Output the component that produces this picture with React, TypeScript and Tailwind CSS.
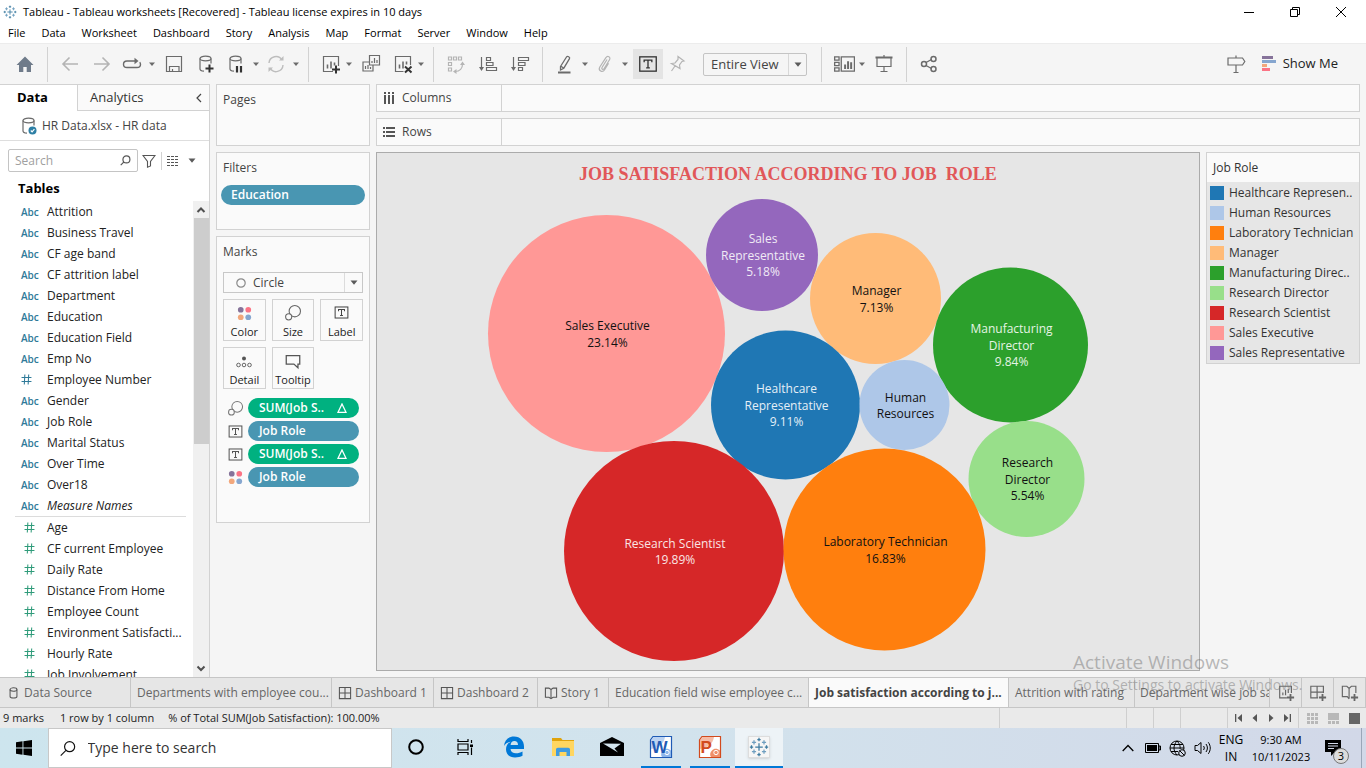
import type { ReactNode } from "react";

type P = { children: ReactNode; className?: string };

/* Outline icon on a 20 unit grid */
const Ic = ({ children, className = "size-5 text-[#6b6b6b]" }: P) => (
  <svg viewBox="0 0 20 20" fill="none" stroke="currentColor" strokeWidth="1.2" className={`shrink-0 ${className}`} aria-hidden="true">
    {children}
  </svg>
);

const Tool = ({ label, className = "", children }: P & { label: string }) => (
  <button type="button" aria-label={label} className={`flex h-[30px] w-7 shrink-0 items-center justify-center ${className}`}>
    {children}
  </button>
);

const Caret = ({ label, className = "" }: { label: string; className?: string }) => (
  <button type="button" aria-label={label} className={`flex h-[30px] w-2 shrink-0 items-center justify-center text-[#6b6b6b] ${className}`}>
    <svg viewBox="0 0 6 4" className="h-1 w-1.5" fill="currentColor" aria-hidden="true"><path d="M0 .5h6L3 4z" /></svg>
  </button>
);

const Sep = () => <span className="mx-2 h-[35px] w-px shrink-0 bg-[#d2d2d2]" />;

const Down = ({ className = "" }: { className?: string }) => (
  <svg viewBox="0 0 8 5" className={`h-[5px] w-2 ${className}`} fill="#5b5b5b" aria-hidden="true"><path d="M.5 .5h7L4 4.8z" /></svg>
);

const TIcon = ({ className }: { className?: string }) => (
  <Ic className={className}>
    <rect x="2.5" y="3.5" width="15" height="13" />
    <path d="M6.5 8.5v-2h7v2M10 6.500v7M8.300 13.500h3.400" />
  </Ic>
);

const SizeIcon = ({ className }: { className?: string }) => (
  <Ic className={className}>
    <circle cx="12" cy="8" r="6.3" />
    <circle cx="5.2" cy="14.3" r="3.4" fill="#fafafa" />
  </Ic>
);

const Dots = ({ className }: { className?: string }) => (
  <svg viewBox="0 0 20 20" className={className} aria-hidden="true">
    <circle cx="5" cy="5" r="3.8" fill="#86739a" />
    <circle cx="15" cy="5" r="3.8" fill="#fb7485" />
    <circle cx="5" cy="15" r="3.8" fill="#f2a77c" />
    <circle cx="15" cy="15" r="3.8" fill="#86a6cf" />
  </svg>
);

const Snow = ({ className }: { className?: string }) => (
  <svg viewBox="0 0 24 24" className={className} fill="none" stroke="#3d7ba0" strokeWidth="1.5" aria-hidden="true">
    <path d="M12 7.5v9M7.5 12h9M12 1v4M10 3h4M12 19v4M10 21h4M3 10v4M1 12h4M21 10v4M19 12h4" />
    <path d="M6 4v5M3.500 6.500h5M18 4v5M15.500 6.500h5M6 15v5M3.500 17.500h5M18 15v5M15.500 17.500h5" stroke="#6f9fc0" />
  </svg>
);

const Cyl = ({ children }: { children?: ReactNode }) => (
  <Ic>
    <ellipse cx="9.500" cy="4.500" rx="5.500" ry="2.300" />
    <path d="M4 4.500v10.500c0 1.200 1.500 2 4 2.200M15 4.500v5" />
    {children}
  </Ic>
);

const menus = ["File", "Data", "Worksheet", "Dashboard", "Story", "Analysis", "Map", "Format", "Server", "Window", "Help"];

const dimensions = ["Attrition", "Business Travel", "CF age band", "CF attrition label", "Department", "Education", "Education Field", "Emp No", "Employee Number", "Gender", "Job Role", "Marital Status", "Over Time", "Over18", "Measure Names"];
const measures = ["Age", "CF current Employee", "Daily Rate", "Distance From Home", "Employee Count", "Environment Satisfacti...", "Hourly Rate", "Job Involvement"];

const legend = [
  ["Healthcare Represen..", "bg-[#1f77b4]"],
  ["Human Resources", "bg-[#aec7e8]"],
  ["Laboratory Technician", "bg-[#ff7f0e]"],
  ["Manager", "bg-[#ffbb78]"],
  ["Manufacturing Direc..", "bg-[#2ca02c]"],
  ["Research Director", "bg-[#98df8a]"],
  ["Research Scientist", "bg-[#d62728]"],
  ["Sales Executive", "bg-[#ff9896]"],
  ["Sales Representative", "bg-[#9467bd]"],
];

type Bubble = { x: number; y: number; r: number; fill: string; ink: string; lines: string[] };
const bubbles: Bubble[] = [
  { x: 229.5, y: 140.5, r: 118.5, fill: "#ff9896", ink: "#111", lines: ["Sales Executive", "23.14%"] },
  { x: 385, y: 62, r: 56, fill: "#9467bd", ink: "#f0eaf5", lines: ["Sales", "Representative", "5.18%"] },
  { x: 498.5, y: 105.5, r: 65.5, fill: "#ffbb78", ink: "#111", lines: ["Manager", "7.13%"] },
  { x: 633.5, y: 152, r: 77.5, fill: "#2ca02c", ink: "#e4f4e4", lines: ["Manufacturing", "Director", "9.84%"] },
  { x: 408.5, y: 212, r: 74.5, fill: "#1f77b4", ink: "#e4eff7", lines: ["Healthcare", "Representative", "9.11%"] },
  { x: 527.5, y: 212, r: 45, fill: "#aec7e8", ink: "#111", lines: ["Human", "Resources"] },
  { x: 649.5, y: 286, r: 58, fill: "#98df8a", ink: "#111", lines: ["Research", "Director", "5.54%"] },
  { x: 297, y: 358, r: 110, fill: "#d62728", ink: "#fae5e5", lines: ["Research Scientist", "19.89%"] },
  { x: 507.5, y: 356.5, r: 101, fill: "#ff7f0e", ink: "#111", lines: ["Laboratory Technician", "16.83%"] },
];

const marks = [
  { icon: "size", text: "SUM(Job S..", delta: true },
  { icon: "text", text: "Job Role", delta: false },
  { icon: "text", text: "SUM(Job S..", delta: true },
  { icon: "dots", text: "Job Role", delta: false },
];

const Card = ({ children, className = "" }: P) => (
  <section className={`border border-[#d2d2d2] bg-[#fafafa] ${className}`}>{children}</section>
);

const MarkButton = ({ label, children }: { label: string; children: ReactNode }) => (
  <button type="button" className="flex h-[42px] flex-col items-center justify-between border border-[#d2d2d2] pt-1 text-[11px] leading-4 text-[#222]">
    {children}
    <span>{label}</span>
  </button>
);

const DashIcon = () => (
  <Ic className="size-[14px] text-[#555]"><path d="M2 2h16v16H2zM2 10h16M10 2v16" strokeWidth="1.5" /></Ic>
);
const BookIcon = () => (
  <Ic className="size-[14px] text-[#555]"><path d="M10 5 7 3H2v13h5l3 2 3-2h5V3h-5zM10 5v13" strokeWidth="1.5" /></Ic>
);

const Tab = ({ children, className = "" }: P) => (
  <button type="button" className={`flex h-full shrink-0 items-center gap-[3px] overflow-hidden border-r border-[#c6c6c6] pl-[6px] whitespace-nowrap ${className}`}>{children}</button>
);

const TaskButton = ({ label, active = false, running = false, children }: { label: string; active?: boolean; running?: boolean; children: ReactNode }) => (
  <button type="button" aria-label={label} className={`flex h-10 w-12 shrink-0 flex-col items-center ${active ? "bg-[#edf3f7]" : ""}`}>
    <span className="flex flex-1 items-center">{children}</span>
    <span className={`h-0.5 ${active ? "w-12" : "w-10"} ${running ? "bg-[#0078d7]" : ""}`} />
  </button>
);

const Office = ({ letter, dark, light }: { letter: string; dark: string; light: string }) => (
  <svg viewBox="0 0 24 24" className="size-6" aria-hidden="true">
    <path d="M4 1.500h18.500v21h-21V5z" fill="#fff" stroke={dark} strokeWidth="1.200" />
    <path d="M4.500 2H16C15 9 9 13 2 14V5z" fill={light} opacity=".6" />
    <path d="M14 15.500c2-2.500 5-2.500 8 0v6.500h-9c-1.500-2-1-4.500 1-6.500z" fill={light} />
    <circle cx="18" cy="17.500" r="2.200" fill="none" stroke="#fff" />
    <text x="2.500" y="18" fontSize="17" fontWeight="700" fontFamily="'Liberation Sans', sans-serif" fill={dark}>{letter}</text>
  </svg>
);

function TopToolbar() {
  return (
    <div className="flex h-[41px] shrink-0 items-center border-t border-[#ececec]">
      <Tool label="Start page" className="ml-[11px]">
        <svg viewBox="0 0 20 20" className="size-5" fill="#6f7b8a" aria-hidden="true"><path d="M10 2.500 18.500 11H16v7h-4.300v-5H8.300v5H4v-7H1.500z" /></svg>
      </Tool>
      <Sep />
      <Tool label="Back"><Ic className="size-5 text-[#b4b4b4]"><path d="M18 10H3M9.500 3.500 3 10l6.500 6.500" strokeWidth="1.6" /></Ic></Tool>
      <Tool label="Forward" className="ml-1"><Ic className="size-5 text-[#b4b4b4]"><path d="M2 10h15M10.500 3.500 17 10l-6.500 6.500" strokeWidth="1.6" /></Ic></Tool>
      <Tool label="Replay" className="ml-0.5">
        <Ic><path d="M14 7H5C2.500 7 1.500 8.500 1.500 10.200S2.500 13.500 5 13.500h10c2.400 0 3.500-1.300 3.500-3 0-1-.3-1.700-.8-2.200" strokeWidth="1.400" /><path d="m12.500 3.800 4 3.200-4 3.200z" fill="currentColor" stroke="none" /></Ic>
      </Tool>
      <Caret label="Replay options" className="ml-0.5" />
      <Tool label="Save" className="ml-1"><Ic><path d="M2.500 2.500h15v15h-15zM5.500 17.500v-5h9.500v5M8.500 17.500v-2.500" /></Ic></Tool>
      <Tool label="New data source" className="ml-1"><Cyl><path d="M13.500 10.500v8M9.500 14.500h8" stroke="#333" strokeWidth="2" /></Cyl></Tool>
      <Tool label="Pause updates" className="ml-0.5"><Cyl><path d="M11 12v6.500M15 12v6.500" stroke="#333" strokeWidth="2.200" /></Cyl></Tool>
      <Caret label="Update options" className="ml-0.5" />
      <Tool label="Refresh" className="ml-0.5">
        <Ic className="size-5 text-[#bdbdbd]"><path d="M3 9A7 7 0 0 1 16 6M17 11a7 7 0 0 1-13 3.200" strokeWidth="1.400" /><path d="M13 6.500h4.500V2zM7 13.500H2.500V18z" fill="currentColor" stroke="none" /></Ic>
      </Tool>
      <Caret label="Refresh options" className="ml-0.5" />
      <Sep />
      <Tool label="New worksheet"><Ic><path d="M12 17.500H2.500v-15h15V12" /><path d="M6.500 14.500v-4M10 14.500v-7M13.500 11.500v-3" strokeWidth="1.600" /><path d="M15 11.500v8M11 15.500h8" stroke="#333" strokeWidth="2" /></Ic></Tool>
      <Caret label="New worksheet options" />
      <Tool label="Duplicate" className="ml-1"><Ic><path d="M8.500 1.500h10v9.500h-10zM8 8H2v9h10v-5.500M11 9V7M13.500 9V4M16 9V6M4.500 15v-3M7 15v-4M9.500 15v-2" /></Ic></Tool>
      <Tool label="Clear sheet" className="ml-1"><Ic><path d="M10.500 17.500H2.500v-15h15V11" /><path d="M6.500 14.500v-4M10 14.500v-7M13.500 10.500v-3" strokeWidth="1.600" /><path d="m12 12.500 6.500 6M18.500 12.500l-6.500 6" stroke="#333" strokeWidth="2" /></Ic></Tool>
      <Caret label="Clear options" />
      <Sep />
      <Tool label="Swap rows and columns">
        <Ic className="size-5 text-[#b4b4b4]"><path d="M2.500 3h3v3h-3zM7.500 3h3v3h-3zM12.500 3h3v3h-3zM2.500 8.500h3v3h-3zM2.500 14h3v3h-3zM9 17.500c5 0 7.500-3 7.500-7.500" /><path d="m14 11 2.500-3.500L19 11zM10.500 15l-3.500 2.500 3.500 2.500z" fill="currentColor" stroke="none" /></Ic>
      </Tool>
      <Tool label="Sort ascending" className="ml-1"><Ic><path d="M3.500 3v12M8.500 3.500h4v3h-4zM8.500 8.500h6.500v3H8.500zM8.500 13.500h10v3h-10z" /><path d="M1 13h5l-2.500 4z" fill="currentColor" stroke="none" /></Ic></Tool>
      <Tool label="Sort descending" className="ml-1"><Ic><path d="M3.500 3v12M8.500 3.500h10v3h-10zM8.500 8.500H15v3H8.500zM8.500 13.500h4v3h-4z" /><path d="M1 13h5l-2.500 4z" fill="currentColor" stroke="none" /></Ic></Tool>
      <Sep />
      <Tool label="Highlight"><Ic><path d="m5.500 12.500 6-9.500c1-1.500 3.800.2 3 1.700l-5.700 9.500-3.300 1.800zM5.500 12l3.500 2.200" strokeWidth="1.300" /><path d="M3 18.500h12.500" strokeWidth="2" /></Ic></Tool>
      <Caret label="Highlight options" className="ml-0.5" />
      <Tool label="Group members" className="ml-0.5"><Ic className="size-5 text-[#b4b4b4]"><path d="m12 5.500-5 8c-.9 1.500 1.100 2.700 2 1.200l5.500-9c1.600-2.700-2-4.700-3.600-2L4.800 13c-2 3.500 2.700 6.200 4.800 2.800l4-6.500" /></Ic></Tool>
      <Caret label="Group options" className="ml-0.5" />
      <button type="button" aria-label="Show mark labels" className="ml-1 flex size-[30px] shrink-0 items-center justify-center bg-[#e4e4e4]"><TIcon className="size-[22px] text-[#333]" /></button>
      <Tool label="Fix axes"><Ic className="size-5 text-[#b4b4b4]"><path d="m11 2.500 6 4.500-2 .5-2.500 3.500.5 3.500-8.500-5 3.500-.5 3-3.500zM8 12l-3.500 5" /></Ic></Tool>
      <div className="relative mx-3 flex h-[23px] w-[104px] shrink-0 rounded-[2px] border border-[#c4c4c4]">
        <select aria-label="Fit" className="w-full appearance-none px-[7px] text-[13px] leading-5 text-[#444] outline-none"><option>Entire View</option></select>
        <span className="pointer-events-none absolute inset-y-0 right-0 flex w-[18px] items-center justify-center border-l border-[#d8d8d8]"><Down /></span>
      </div>
      <span className="mr-2 ml-0.5 h-[35px] w-px shrink-0 bg-[#d2d2d2]" />
      <Tool label="Show cards"><Ic className="size-[22px] text-[#6b6b6b]"><path d="M1.500 3.500h4v3h-4zM1.500 8.500h4v3h-4zM1.500 13.500h4v3h-4zM7.500 3.500h12v13h-12z" /><path d="M11 14.500v-4M13.700 14.500v-7M16.500 14.500v-6" strokeWidth="1.800" /></Ic></Tool>
      <Caret label="Card options" />
      <Tool label="Presentation mode" className="ml-1"><Ic><path d="M1.500 3.500h17" strokeWidth="2" /><path d="M3 4v8.500h14V4M10 12.500V17M6.500 17.500h7M10 1v2" /></Ic></Tool>
      <Sep />
      <Tool label="Share"><Ic><circle cx="5" cy="10" r="2.500" strokeWidth="1.500" /><circle cx="14.500" cy="5" r="2.500" strokeWidth="1.500" /><circle cx="14.500" cy="15" r="2.500" strokeWidth="1.500" /><path d="m7 8.500 5.500-3M7 11.500l5.500 3" strokeWidth="1.400" /></Ic></Tool>
      <div className="flex-1" />
      <Tool label="Guide"><Ic><path d="M2 4h14.500l2.300 3.500-2.300 3.500H2zM10 1.500V4M10 11v8M7.500 18.500h5" /></Ic></Tool>
      <button type="button" className="mr-7 ml-3 flex items-center gap-1.5 text-[13px] text-[#222]">
        <svg viewBox="0 0 15 16" className="h-4 w-[15px]" aria-hidden="true">
          <path fill="#86739a" d="M0 0h11v3H0z" /><path fill="#86a6cf" d="M0 4h14v3H0z" /><path fill="#f2a77c" d="M0 8h5v3H0z" /><path fill="#fb7485" d="M0 12h8v3H0z" />
        </svg>
        Show Me
      </button>
    </div>
  );
}

function DataPane() {
  return (
    <aside className="flex w-[210px] shrink-0 flex-col border-r border-[#d2d2d2] bg-white">
      <div className="flex h-[27px] shrink-0 border-t border-[#d2d2d2] text-[13px]">
        <button type="button" className="w-[77px] shrink-0 pr-3 font-bold text-black">Data</button>
        <div className="flex flex-1 items-center justify-between border-b border-l border-[#d2d2d2] bg-[#fafafa] pl-3 pr-[7px]">
          <button type="button" className="text-[#333]">Analytics</button>
          <button type="button" aria-label="Collapse pane"><svg viewBox="0 0 6 10" className="h-[10px] w-1.5" fill="none" stroke="#444" strokeWidth="1.200" aria-hidden="true"><path d="M5 1 1 5l4 4" /></svg></button>
        </div>
      </div>
      <div className="flex h-[30px] shrink-0 items-center gap-[3px] border-b border-[#dedede] pl-[19px] text-xs text-[#444]">
        <Cyl><circle cx="13.500" cy="14.500" r="4" fill="#2d7fa5" stroke="none" /><path d="m11.800 14.500 1.300 1.300 2.300-2.600" stroke="#fff" /></Cyl>
        HR Data.xlsx - HR data
      </div>
      <div className="mt-2 flex h-[23px] shrink-0 items-center pl-2">
        <label className="flex h-full w-[130px] items-center rounded-[2px] border border-[#c4c4c4] px-1.5">
          <input aria-label="Search" placeholder="Search" className="w-full min-w-0 text-xs outline-none placeholder:text-[#a0a0a0]" />
          <svg viewBox="0 0 12 12" className="size-[11px] shrink-0" fill="none" stroke="#555" strokeWidth="1.300" aria-hidden="true"><circle cx="7" cy="4.800" r="3.800" /><path d="M4.300 7.500.8 11" /></svg>
        </label>
        <button type="button" aria-label="Filter fields" className="ml-1"><svg viewBox="0 0 14 14" className="size-[14px]" fill="none" stroke="#555" strokeWidth="1.100" aria-hidden="true"><path d="M1 1.500h12L8.500 7.500v4.500l-3 1.200V7.500z" /></svg></button>
        <span className="mx-[5px] h-[18px] w-px bg-[#d2d2d2]" />
        <button type="button" aria-label="View options" className="flex items-center gap-[9px]">
          <svg viewBox="0 0 12 10" className="h-[10px] w-3" stroke="#555" strokeWidth="1" strokeDasharray="3 1" aria-hidden="true"><path d="M0 .5h12M0 3.500h12M0 6.500h12M0 9.500h12" /></svg>
          <Down />
        </button>
      </div>
      <h2 className="shrink-0 pt-[5px] pl-[18px] text-[13px] leading-[22px] font-bold text-black">Tables</h2>
      <div className="mt-0.5 flex min-h-0 flex-1">
        <div className="min-h-0 flex-1 overflow-hidden pl-[15px] text-xs leading-[21px] text-[#222]">
          <ul className="mr-[7px] border-b border-[#dcdcdc]">
            {dimensions.map((d) => (
              <li key={d} className="flex h-[21px]">
                <span className="w-8 shrink-0 pl-[6px] text-[10px] leading-[22px] font-semibold text-[#2f7a99]">
                  {d === "Employee Number" ? <Ic className="mt-[5px] size-[11px] text-[#2f7a99]"><path d="M7 1 6 19M14 1l-1 18M1 6.500h18M1 13.500h18" strokeWidth="1.900" /></Ic> : "Abc"}
                </span>
                <span className={d === "Measure Names" ? "italic" : ""}>{d}</span>
              </li>
            ))}
          </ul>
          <ul>
            {measures.map((m) => (
              <li key={m} className="flex h-[21px] whitespace-nowrap">
                <span className="w-8 shrink-0 pl-[9px]"><Ic className="mt-[5px] size-[11px] text-[#2f9b7a]"><path d="M7 1 6 19M14 1l-1 18M1 6.500h18M1 13.500h18" strokeWidth="1.900" /></Ic></span>
                {m}
              </li>
            ))}
          </ul>
        </div>
        <div className="flex w-4 shrink-0 flex-col items-center bg-[#f0f0f0]">
          <svg viewBox="0 0 16 17" className="h-[17px] w-4 shrink-0" fill="none" stroke="#505050" strokeWidth="2" aria-hidden="true"><path d="m4.500 11 3.500-3.500 3.500 3.500" /></svg>
          <div className="h-[226px] w-[15px] bg-[#cdcdcd]" />
          <div className="flex-1" />
          <svg viewBox="0 0 16 17" className="h-[17px] w-4 shrink-0" fill="none" stroke="#505050" strokeWidth="2" aria-hidden="true"><path d="M4.500 6.500 8 10l3.500-3.500" /></svg>
        </div>
      </div>
    </aside>
  );
}

function Shelves() {
  return (
    <div className="flex w-[154px] shrink-0 flex-col gap-1.5 text-xs text-[#444]">
      <Card className="h-[62px] shrink-0 px-1.5 pt-[7px]"><h3>Pages</h3></Card>
      <Card className="h-[78px] shrink-0 px-1 pt-[7px]">
        <h3 className="pl-0.5">Filters</h3>
        <button type="button" className="mt-[9px] flex h-5 w-full items-center rounded-full bg-[#4996b2] pl-[10px] font-semibold text-white">Education</button>
      </Card>
      <Card className="h-[287px] shrink-0 px-1.5 pt-[7px]">
        <h3>Marks</h3>
        <div className="relative mt-3 flex h-[21px] items-center border border-[#c8c8c8]">
          <svg viewBox="0 0 10 10" className="ml-3 size-[10px] shrink-0" fill="none" stroke="#8a8a8a" strokeWidth="1.200" aria-hidden="true"><circle cx="5" cy="5" r="4.200" /></svg>
          <select aria-label="Mark type" className="w-full appearance-none pl-[7px] outline-none"><option>Circle</option></select>
          <span className="pointer-events-none absolute inset-y-0 right-0 flex w-[18px] items-center justify-center border-l border-[#dcdcdc]"><Down /></span>
        </div>
        <div className="mt-1.5 grid grid-cols-3 gap-1.5">
          <MarkButton label="Color"><Dots className="mt-0.5 size-[15px]" /></MarkButton>
          <MarkButton label="Size"><SizeIcon className="size-[18px] text-[#666]" /></MarkButton>
          <MarkButton label="Label"><TIcon className="size-[17px] text-[#444]" /></MarkButton>
          <MarkButton label="Detail">
            <svg viewBox="0 0 16 12" className="mt-1 h-3 w-4" fill="none" stroke="#666" aria-hidden="true"><circle cx="8" cy="2.500" r="2" fill="#555" stroke="none" /><circle cx="2.500" cy="9" r="1.800" /><circle cx="8" cy="9" r="1.800" /><circle cx="13.500" cy="9" r="1.800" /></svg>
          </MarkButton>
          <MarkButton label="Tooltip"><Ic className="size-[18px] text-[#555]"><path d="M2.500 4h15v9.500h-2v4l-4.500-4H2.500z" strokeWidth="1.400" /></Ic></MarkButton>
        </div>
        <ul className="mt-[9px] flex flex-col gap-[3px] px-1">
          {marks.map((m, i) => (
            <li key={i} className="flex h-5 items-center gap-1">
              {m.icon === "size" && <SizeIcon className="size-[17px] text-[#777]" />}
              {m.icon === "text" && <TIcon className="size-[17px] text-[#555]" />}
              {m.icon === "dots" && <Dots className="mx-px size-[15px] shrink-0" />}
              <button type="button" className={`flex h-5 flex-1 items-center justify-between rounded-full pr-3 pl-[11px] font-semibold text-white ${m.delta ? "bg-[#00b180]" : "bg-[#4996b2]"}`}>
                {m.text}
                {m.delta && <svg viewBox="0 0 10 10" className="size-[10px]" fill="none" stroke="#fff" strokeWidth="1.300" aria-hidden="true"><path d="M5 1 9 9.300H1z" /></svg>}
              </button>
            </li>
          ))}
        </ul>
      </Card>
    </div>
  );
}

function Chart() {
  return (
    <section className="flex min-w-0 flex-1 flex-col border border-[#ababab] bg-[#e6e6e6]">
      <h1 className="h-10 shrink-0 pt-2 text-center font-['Liberation_Serif',serif] text-[18px] leading-[26px] font-bold whitespace-pre text-[#e15759]">JOB SATISFACTION ACCORDING TO JOB  ROLE</h1>
      <svg viewBox="0 0 822 477" className="min-h-0 w-full flex-1" role="img" aria-label="Job satisfaction by job role">
        {bubbles.map((b) => (
          <g key={b.lines.join()}>
            <circle cx={b.x} cy={b.y} r={b.r} fill={b.fill} />
            <text textAnchor="middle" fill={b.ink} fontSize="12">
              {b.lines.map((l, i) => (
                <tspan key={l} x={b.x + 1} y={Math.round(b.y + 5 + i * 16.5 - (b.lines.length - 1) * 8.5)}>{l}</tspan>
              ))}
            </text>
          </g>
        ))}
      </svg>
    </section>
  );
}

function Legend() {
  return (
    <section className="w-[154px] shrink-0 self-start border border-[#d2d2d2] bg-[#e6e6e6] text-xs text-[#333]">
      <h3 className="flex h-[29px] items-center bg-[#fafafa] pl-1.5">Job Role</h3>
      <ul className="pt-px">
        {legend.map(([name, color]) => (
          <li key={name} className="flex h-5 items-center gap-[5px] pl-[3px] whitespace-nowrap">
            <span className={`size-[14px] shrink-0 ${color}`} />
            {name}
          </li>
        ))}
      </ul>
    </section>
  );
}

function Shelf({ name, children }: { name: string; children: ReactNode }) {
  return (
    <Card className="flex h-7 shrink-0 text-xs text-[#444]">
      <div className="flex w-[125px] shrink-0 items-center gap-[7px] border-r border-[#d2d2d2] pl-1.5">
        <svg viewBox="0 0 12 12" className="size-3" fill="#555" aria-hidden="true">{children}</svg>
        {name}
      </div>
    </Card>
  );
}

function SheetTabs() {
  return (
    <div className="flex h-[31px] shrink-0 items-center border-y border-[#c6c6c6] bg-[#e6e6e6] text-xs text-[#666]">
      <Tab className="w-[131px]">
        <svg viewBox="0 0 10 14" className="mx-[3px] h-3 w-[9px]" fill="none" stroke="#555" strokeWidth="1.200" aria-hidden="true"><ellipse cx="5" cy="3" rx="4" ry="2" /><path d="M1 3v8c0 2.500 8 2.500 8 0V3" /></svg>
        Data Source
      </Tab>
      <Tab className="w-[201px]">Departments with employee cou...</Tab>
      <Tab className="w-[102px]"><DashIcon />Dashboard 1</Tab>
      <Tab className="w-[104px]"><DashIcon />Dashboard 2</Tab>
      <Tab className="w-[71px]"><BookIcon />Story 1</Tab>
      <Tab className="w-[200px]">Education field wise employee c...</Tab>
      <Tab className="w-[200px] bg-[#fafafa] font-bold text-[#444]">Job satisfaction according to j...</Tab>
      <Tab className="w-[126px]">Attrition with rating</Tab>
      <button type="button" className="h-full min-w-0 flex-1 overflow-hidden border-r border-[#c6c6c6] pl-[5px] text-left whitespace-nowrap">Department wise job sa</button>
      <button type="button" aria-label="New worksheet tab" className="flex h-full w-8 shrink-0 items-center justify-center border-r border-[#c6c6c6]"><Ic className="size-[18px] text-[#666]"><path d="M11 15.500H3v-13h13V10M6.500 12.500v-3M9.500 12.500v-6M12.500 10V5.500" strokeWidth="1.300" /><path d="M15 11v8M11 15h8" strokeWidth="2" /></Ic></button>
      <button type="button" aria-label="New dashboard tab" className="flex h-full w-8 shrink-0 items-center justify-center border-r border-[#c6c6c6]"><Ic className="size-[18px] text-[#666]"><path d="M10 15.500H2v-13h14V10M2 9h14M9 2.500v13" strokeWidth="1.300" /><path d="M15 11v8M11 15h8" strokeWidth="2" /></Ic></button>
      <button type="button" aria-label="New story tab" className="flex h-full w-8 shrink-0 items-center justify-center border-r border-[#c6c6c6]"><Ic className="size-[18px] text-[#666]"><path d="M9 16.500 7 14H1.500V2.500h5L9 5l2.500-2.500h5V10M9 5v11.500" strokeWidth="1.300" /><path d="M15 11v8M11 15h8" strokeWidth="2" /></Ic></button>
    </div>
  );
}

function StatusBar() {
  return (
    <div className="flex h-5 shrink-0 items-stretch bg-[#eaeaea] text-[11px] leading-5 text-[#222]">
      <span className="pl-[3px]">9 marks</span>
      <span className="pl-4">1 row by 1 column</span>
      <span className="flex-1 pl-3.5">% of Total SUM(Job Satisfaction): 100.00%</span>
      <span className="w-[127px] border-l border-[#cfcfcf]" />
      <span className="w-[27px] border-l border-[#cfcfcf]" />
      <span className="w-[27px] border-l border-[#cfcfcf]" />
      <span className="w-[47px] border-l border-[#cfcfcf]" />
      <div className="flex w-[71px] items-center justify-between border-l border-[#cfcfcf] px-[7px] text-[#555]">
        <button type="button" aria-label="First sheet"><svg viewBox="0 0 8 8" className="size-2" fill="currentColor"><path d="M0 0h1.300v8H0zM7 0v8L2.500 4z" /></svg></button>
        <button type="button" aria-label="Previous sheet"><svg viewBox="0 0 8 8" className="size-2" fill="currentColor"><path d="M6 0v8L1.500 4z" /></svg></button>
        <button type="button" aria-label="Next sheet"><svg viewBox="0 0 8 8" className="size-2" fill="currentColor"><path d="M2 0v8l4.500-4z" /></svg></button>
        <button type="button" aria-label="Last sheet"><svg viewBox="0 0 8 8" className="size-2" fill="currentColor"><path d="M6.700 0H8v8H6.700zM1 0v8l4.500-4z" /></svg></button>
      </div>
      <div className="flex w-[68px] items-center gap-[10px] border-l border-[#cfcfcf] pl-2">
        <svg viewBox="0 0 11 11" className="size-[11px]" fill="#b8b8b8" aria-hidden="true"><path d="M0 0h3v3H0zM4 0h3v3H4zM8 0h3v3H8zM0 4h3v3H0zM4 4h3v3H4zM8 4h3v3H8zM0 8h3v3H0zM4 8h3v3H4zM8 8h3v3H8z" /></svg>
        <svg viewBox="0 0 11 11" className="size-[11px]" fill="#b8b8b8" aria-hidden="true"><path d="M0 0h11v7H0zM0 8h3v3H0zM4 8h3v3H4zM8 8h3v3H8z" /></svg>
        <span className="size-[11px] bg-[#666]" />
      </div>
    </div>
  );
}

function Taskbar() {
  return (
    <footer className="flex h-10 shrink-0 items-stretch bg-linear-to-r from-[#cde5ee] via-[#d2e3ed] to-[#d2d8e8] text-xs text-black">
      <button type="button" aria-label="Start" className="flex w-12 shrink-0 items-center justify-center">
        <svg viewBox="0 0 16 16" className="size-4" aria-hidden="true"><path d="M0 2.200 6.500 1.300v6.300H0zM7.400 1.200 16 0v7.600H7.400zM0 8.400h6.500v6.300L0 13.800zM7.400 8.400H16V16l-8.600-1.200z" /></svg>
      </button>
      <label className="flex w-[344px] shrink-0 items-center gap-3 border border-[#c8c8c8] bg-white pl-[11px]">
        <svg viewBox="0 0 17 17" className="size-[17px]" fill="none" stroke="#111" strokeWidth="1.300" aria-hidden="true"><circle cx="10.500" cy="6.500" r="5.500" /><path d="M6.500 10.500.8 16.300" /></svg>
        <input aria-label="Type here to search" placeholder="Type here to search" className="w-full min-w-0 text-sm outline-none placeholder:text-[#333]" />
      </label>
      <div className="flex shrink-0 gap-px">
        <TaskButton label="Cortana"><svg viewBox="0 0 16 16" className="size-4" fill="none" stroke="#000" strokeWidth="2" aria-hidden="true"><circle cx="8" cy="8" r="6.800" /></svg></TaskButton>
        <TaskButton label="Task view"><svg viewBox="0 0 17 16" className="h-4 w-[17px]" fill="none" stroke="#000" strokeWidth="1.200" aria-hidden="true"><path d="M1 0v2.500h10V0M1 16v-2.500h10V16M1 5h10v6H1zM14.500 1v3M14.500 8.500V16" /><path d="M13 5.500h3v2.500h-3z" fill="#000" stroke="none" /></svg></TaskButton>
        <TaskButton label="Edge"><svg viewBox="0 0 22 22" className="size-[22px]" aria-hidden="true"><path fill="#0078d7" d="M1 10C1.500 4 5.500.5 11 .5c6.500 0 10 4.500 10 10V13H7.500c.3 3 2.500 4.300 5.500 4.300 2.500 0 4.500-.6 6.500-1.800v4.300c-2 1.200-4.500 1.700-7.500 1.700-5.500 0-9-3.300-9-8.300 0-3.300 1.800-6 4.700-7.500C4.500 6.300 2.500 7.700 1 10zm6.600-1h7.400c0-2.500-1.300-4-3.600-4S7.900 6.500 7.600 9z" /></svg></TaskButton>
        <TaskButton label="File Explorer"><svg viewBox="0 0 22 20" className="h-5 w-[22px]" aria-hidden="true"><path fill="#e0a30c" d="M0 1h9l1.500 2H22v4H0z" /><path fill="#ffd660" d="M0 4h22v15H0z" /><path fill="#3f9be0" d="M4 19v-6.500c0-1 .8-1.700 1.800-1.700h10.400c1 0 1.800.7 1.800 1.700V19h-3.500v-4h-7v4z" /></svg></TaskButton>
        <TaskButton label="Mail"><svg viewBox="0 0 24 20" className="h-5 w-6" aria-hidden="true"><path d="M12 0 24 6v13H0V6z" /><path d="m3 6.500 18 .3-6.500 4.700 3.500 4z" fill="#d2e3ed" /></svg></TaskButton>
        <TaskButton label="Word" running><Office letter="W" dark="#1f5bb5" light="#8db6ea" /></TaskButton>
        <TaskButton label="PowerPoint" running><Office letter="P" dark="#d24a1d" light="#f0906a" /></TaskButton>
        <TaskButton label="Tableau" active running><span className="flex size-[22px] items-center justify-center border border-[#ddd] bg-[#f6f6f6] shadow-sm"><Snow className="size-5" /></span></TaskButton>
      </div>
      <div className="flex-1" />
      <div className="flex shrink-0 items-center gap-2">
        <svg viewBox="0 0 12 8" className="h-2 w-3" fill="none" stroke="#000" strokeWidth="1.300" aria-hidden="true"><path d="m.7 7 5.300-5.500L11.300 7" /></svg>
        <svg viewBox="0 0 16 10" className="ml-[3px] h-[10px] w-4" aria-hidden="true"><path d="M.5 .5h13v9H.5zM14 3h1.500v4H14z" fill="none" stroke="#000" /><path d="M2 2h10v6H2z" /></svg>
        <svg viewBox="0 0 17 17" className="size-[17px]" fill="none" stroke="#000" aria-hidden="true"><circle cx="8" cy="8" r="7" /><path d="M1 8h14M8 1c-4 4-4 10 0 14M8 1c3 3 3.500 6 3 8M2 4.500h12M2 11.500h7" /><circle cx="13" cy="13" r="3.300" fill="#d4dcea" /><path d="m10.800 10.800 4.400 4.400" /></svg>
        <svg viewBox="0 0 17 14" className="h-[14px] w-[17px]" fill="none" stroke="#000" aria-hidden="true"><path d="M1 4.500h2.500L7 1.500v11L3.500 9.500H1zM9.500 5c1 1.300 1 2.700 0 4M12 3c1.900 2.500 1.900 5.500 0 8M14.300 1.300c2.600 3.500 2.600 8 0 11.500" /></svg>
      </div>
      <button type="button" className="ml-1.5 w-7 shrink-0 text-center leading-[17px]">ENG<br />IN</button>
      <button type="button" className="ml-1 w-[64px] shrink-0 text-center text-[11px] leading-[17px] whitespace-nowrap">9:30 AM<br />10/11/2023</button>
      <button type="button" aria-label="3 notifications" className="relative ml-3 flex w-[37px] shrink-0 items-center border-r border-[#9aa6b8]">
        <svg viewBox="0 0 16 16" className="size-4" aria-hidden="true"><path d="M0 0h16v12h-6l-4 4v-4H0z" /><path d="M3 3.500h10M3 6h10M3 8.500h6" stroke="#d2d8e8" /></svg>
        <span className="absolute bottom-1 left-2 flex size-4 items-center justify-center rounded-full border border-[#777] bg-[#dcdcdc] text-[11px]">3</span>
      </button>
      <div className="w-1 shrink-0" />
    </footer>
  );
}

export default function App() {
  return (
    <div className="relative flex h-screen flex-col overflow-hidden bg-[#f5f5f5] font-['Open_Sans',sans-serif]">
      <header className="shrink-0 bg-white text-[11px] text-black">
        <div className="flex h-6 items-center pl-[3px]">
          <Snow className="size-[14px]" />
          <span className="ml-1.5">Tableau - Tableau worksheets [Recovered] - Tableau license expires in 10 days</span>
          <div className="ml-auto flex pr-0.5">
            <button type="button" aria-label="Minimize" className="flex h-6 w-[46px] items-center justify-center"><svg viewBox="0 0 10 10" className="size-[10px]" stroke="#000" aria-hidden="true"><path d="M0 5.500h10" /></svg></button>
            <button type="button" aria-label="Restore" className="flex h-6 w-[46px] items-center justify-center"><svg viewBox="0 0 10 10" className="size-[10px]" fill="none" stroke="#000" aria-hidden="true"><path d="M.5 2.500h7v7h-7zM2.500 2V.5h7v7H8" /></svg></button>
            <button type="button" aria-label="Close" className="flex h-6 w-[46px] items-center justify-center"><svg viewBox="0 0 10 10" className="size-[10px]" stroke="#000" aria-hidden="true"><path d="m0 0 10 10M10 0 0 10" /></svg></button>
          </div>
        </div>
        <nav className="flex h-[19px] items-center gap-4 pl-2">
          {menus.map((m) => <button type="button" key={m}>{m}</button>)}
        </nav>
      </header>
      <TopToolbar />
      <main className="flex min-h-0 flex-1">
        <DataPane />
        <div className="flex min-w-0 flex-1 gap-1.5 px-1.5 pb-1.5">
          <Shelves />
          <div className="flex min-w-0 flex-1 flex-col gap-1.5">
            <Shelf name="Columns"><path d="M1 0h2v2H1zM5 0h2v2H5zM9 0h2v2H9zM1 3h2v9H1zM5 3h2v9H5zM9 3h2v9H9z" /></Shelf>
            <Shelf name="Rows"><path d="M0 1h2v2H0zM0 5h2v2H0zM0 9h2v2H0zM3 1h9v2H3zM3 5h9v2H3zM3 9h9v2H3z" /></Shelf>
            <div className="flex min-h-0 flex-1 gap-1.5">
              <Chart />
              <Legend />
            </div>
          </div>
        </div>
      </main>
      <SheetTabs />
      <StatusBar />
      <Taskbar />
      <div className="pointer-events-none absolute right-[57px] bottom-[73px] w-[236px] whitespace-nowrap text-[#787878]/50">
        <p className="text-[19px] leading-[26px]">Activate Windows</p>
        <p className="text-sm leading-5">Go to Settings to activate Windows.</p>
      </div>
    </div>
  );
}
